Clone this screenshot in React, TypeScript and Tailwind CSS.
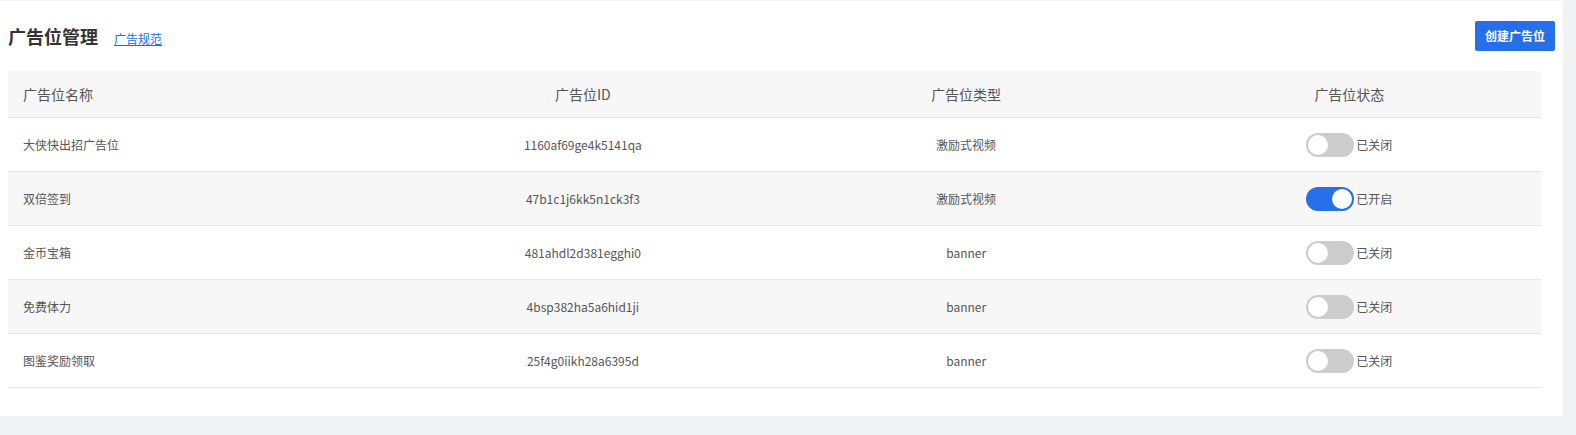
const rows = [
  { name: "大侠快出招广告位", id: "1160af69ge4k5141qa", type: "激励式视频", on: false },
  { name: "双倍签到", id: "47b1c1j6kk5n1ck3f3", type: "激励式视频", on: true },
  { name: "金币宝箱", id: "481ahdl2d381egghi0", type: "banner", on: false },
  { name: "免费体力", id: "4bsp382ha5a6hid1ji", type: "banner", on: false },
  { name: "图鉴奖励领取", id: "25f4g0iikh28a6395d", type: "banner", on: false },
];

export default function App() {
  return (
    <div className="w-[1576px] h-[435px] bg-[#f2f3f5] pt-px" style={{ fontFamily: '"Noto Sans CJK SC", "Noto Sans", sans-serif' }}>
      <div className="w-[1563px] h-[415px] bg-white px-2">
        <div className="flex items-center justify-between h-[70px]">
          <div className="flex items-baseline gap-4">
            <span className="text-[18px] font-bold text-[#333]">广告位管理</span>
            <a className="text-[12px] text-[#1a6df0] underline">广告规范</a>
          </div>
          <button className="w-[80px] h-[30px] bg-[#2570e8] text-white text-[12px] font-bold rounded-[2px]">创建广告位</button>
        </div>
        <div className="w-[1533px] text-[#555]">
          <div className="grid grid-cols-4 h-[47px] items-center bg-[#f7f7f7] border-b border-[#e5e5e5] text-[14px] text-[#555]">
            <div className="pl-[15px]">广告位名称</div>
            <div className="text-center">广告位ID</div>
            <div className="text-center">广告位类型</div>
            <div className="text-center">广告位状态</div>
          </div>
          {rows.map((r, i) => (
            <div key={r.id} className={`grid grid-cols-4 h-[54px] items-center border-b border-[#e5e5e5] text-[12px] ${i % 2 === 1 ? "bg-[#f7f7f7]" : "bg-white"}`}>
              <div className="pl-[15px]">{r.name}</div>
              <div className="text-center">{r.id}</div>
              <div className="text-center">{r.type}</div>
              <div className="flex justify-center items-center gap-[2px]">
                <div className={`w-[48px] h-[24px] rounded-full p-[2px] flex ${r.on ? "bg-[#2570e8] justify-end" : "bg-[#cccccc] justify-start"}`}>
                  <div className="w-[20px] h-[20px] rounded-full bg-white" />
                </div>
                <span>{r.on ? "已开启" : "已关闭"}</span>
              </div>
            </div>
          ))}
        </div>
      </div>
    </div>
  );
}
